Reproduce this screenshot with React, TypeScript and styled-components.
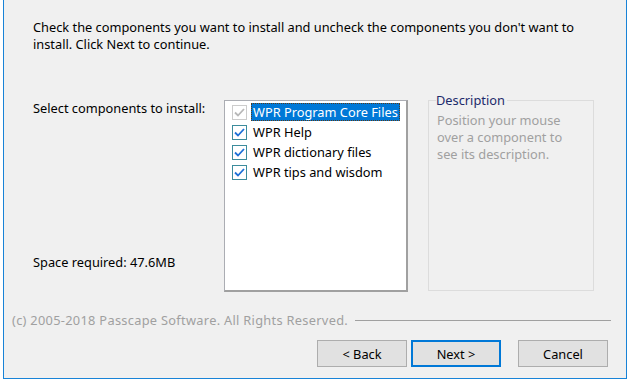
import React from 'react'
import styled, { createGlobalStyle } from 'styled-components'

const Global = createGlobalStyle`
  html, body {
    margin: 0;
    padding: 0;
    background: #ffffff;
  }
  body {
    font-family: "Noto Sans", "DejaVu Sans", sans-serif;
    font-size: 12.8px;
    color: #000000;
  }
`

const components = [
  { name: 'WPR Program Core Files', checked: true, locked: true, selected: true },
  { name: 'WPR Help', checked: true },
  { name: 'WPR dictionary files', checked: true },
  { name: 'WPR tips and wisdom', checked: true }
]

const App = () => {
  return (
    <>
      <Global />
      <Window>
        <Intro>
          Check the components you want to install and uncheck the components you don't want to
          install. Click Next to continue.
        </Intro>
        <Main>
          <Side>
            <span>Select components to install:</span>
            <span>Space required: 47.6MB</span>
          </Side>
          <ListBox>
            {components.map((c) => (
              <Item key={c.name}>
                <Check $locked={!!c.locked}>
                  {c.checked && (
                    <svg width="11" height="9" viewBox="0 0 11 9">
                      <path
                        d="M1 4.5 L4 7.5 L10 1"
                        fill="none"
                        stroke={c.locked ? '#b8b8b8' : '#1e6fd6'}
                        strokeWidth="1.8"
                      />
                    </svg>
                  )}
                </Check>
                <Label $selected={!!c.selected}>{c.name}</Label>
              </Item>
            ))}
          </ListBox>
          <Group>
            <Legend>Description</Legend>
            <Hint>Position your mouse over a component to see its description.</Hint>
          </Group>
        </Main>
        <Brand>
          <span>(c) 2005-2018 Passcape Software. All Rights Reserved.</span>
          <Rule />
        </Brand>
        <Buttons>
          <Button>&lt; Back</Button>
          <Button $primary>Next &gt;</Button>
          <Button $gap>Cancel</Button>
        </Buttons>
      </Window>
    </>
  )
}
export default App

const Window = styled.div`
  box-sizing: border-box;
  margin-left: 3px;
  width: 624px;
  height: 379px;
  background: #f0f0f0;
  border: 1px solid #1883d7;
  border-top: none;
  display: flex;
  flex-direction: column;
`

const Intro = styled.p`
  margin: 19px 0 0 29px;
  width: 560px;
  line-height: 17px;
`

const Main = styled.div`
  display: flex;
  margin: 47px 0 0 29px;
  height: 192px;
`

const Side = styled.div`
  width: 191px;
  display: flex;
  flex-direction: column;
  justify-content: space-between;
  line-height: 17px;
  padding-bottom: 21px;
`

const ListBox = styled.div`
  box-sizing: border-box;
  width: 184px;
  height: 192px;
  background: #ffffff;
  border: 1px solid #abadb3;
  border-right: 2px solid #a0a0a0;
  border-bottom: 2px solid #a0a0a0;
  padding: 2px 0 0 7px;
  display: flex;
  flex-direction: column;
  gap: 2px;
`

const Item = styled.div`
  display: flex;
  align-items: center;
  height: 18px;
`

const Check = styled.span<{ $locked: boolean }>`
  box-sizing: border-box;
  flex: none;
  width: 15px;
  height: 15px;
  border: 1px solid ${(p) => (p.$locked ? '#cccccc' : '#3c8c9c')};
  background: #ffffff;
  display: flex;
  align-items: center;
  justify-content: center;
  margin-right: 4px;
`

const Label = styled.span<{ $selected: boolean }>`
  box-sizing: border-box;
  height: 18px;
  line-height: 16px;
  padding: 0 1px;
  white-space: nowrap;
  color: ${(p) => (p.$selected ? '#ffffff' : '#000000')};
  background: ${(p) => (p.$selected ? '#0078d7' : 'transparent')};
  border: 1px dotted ${(p) => (p.$selected ? '#5a3b1a' : 'transparent')};
`

const Group = styled.fieldset`
  box-sizing: border-box;
  width: 166px;
  height: 199px;
  margin: -8px 0 0 20px;
  padding: 0 8px;
  border: 1px solid #dcdcdc;
  min-width: 0;
`

const Legend = styled.legend`
  padding: 0 2px 0 0;
  margin-left: -1px;
  line-height: 17px;
  color: #1c2a6b;
`

const Hint = styled.div`
  margin-top: 3px;
  line-height: 17px;
  color: #a0a0a0;
`

const Brand = styled.div`
  display: flex;
  align-items: center;
  gap: 7px;
  margin: 19px 15px 0 8px;
  height: 17px;
  color: #a0a0a0;
  letter-spacing: 0.3px;
  white-space: nowrap;
`

const Rule = styled.div`
  flex: 1;
  height: 1px;
  background: #a0a0a0;
  margin-top: 2px;
`

const Buttons = styled.div`
  display: flex;
  justify-content: flex-end;
  gap: 4px;
  margin: 12px 18px 0 0;
`

const Button = styled.button<{ $primary?: boolean; $gap?: boolean }>`
  box-sizing: border-box;
  width: 90px;
  height: 27px;
  margin-left: ${(p) => (p.$gap ? '13px' : '0')};
  background: #e1e1e1;
  border: ${(p) => (p.$primary ? '2px solid #0078d7' : '1px solid #adadad')};
  font-family: inherit;
  font-size: 12.8px;
  color: #000000;
  padding: 0;
`
